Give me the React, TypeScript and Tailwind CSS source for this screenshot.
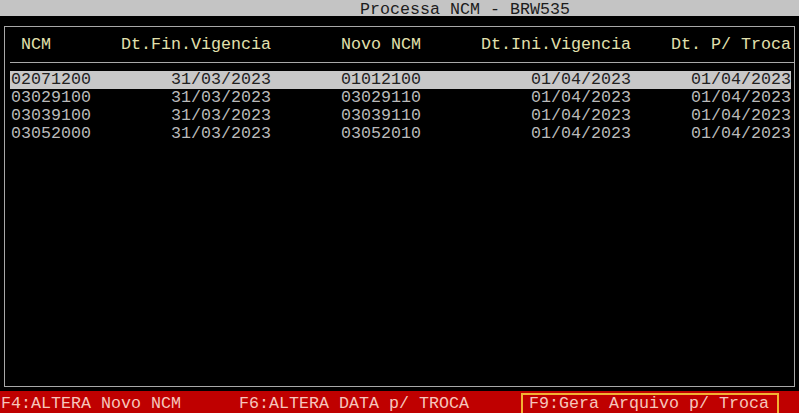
const rows = [
  ["02071200", "31/03/2023", "01012100", "01/04/2023", "01/04/2023"],
  ["03029100", "31/03/2023", "03029110", "01/04/2023", "01/04/2023"],
  ["03039100", "31/03/2023", "03039110", "01/04/2023", "01/04/2023"],
  ["03052000", "31/03/2023", "03052010", "01/04/2023", "01/04/2023"],
];

function Cols({ cells, header }: { cells: string[]; header?: boolean }) {
  return (
    <>
      <span className={`w-[100px] whitespace-pre ${header ? "pl-[10px]" : ""}`}>{cells[0]}</span>
      <span className="w-[160px] text-right whitespace-pre">{cells[1]}</span>
      <span className="w-[150px] text-right whitespace-pre">{cells[2]}</span>
      <span className="w-[210px] text-right whitespace-pre">{cells[3]}</span>
      <span className="w-[160px] text-right whitespace-pre">{cells[4]}</span>
    </>
  );
}

export default function App() {
  return (
    <div className="w-[799px] h-[413px] bg-black overflow-hidden font-['Liberation_Mono','Courier_New',monospace] text-[16.67px]">
      {/* title bar */}
      <div className="h-[16px] bg-[#c4c4c4] text-[#1c1c1c] pl-[360px]">
        <div className="leading-[19px] whitespace-pre">Processa NCM - BRW535</div>
      </div>

      {/* browse box */}
      <div className="mt-[10px] ml-[4px] w-[791px] h-[361px] border border-[#a8a8a8]">
        <div className="h-[36px] border-b border-[#a8a8a8] flex items-center ml-[5px] pl-px text-[#e2e0ae]">
          <Cols header cells={["NCM", "Dt.Fin.Vigencia", "Novo NCM", "Dt.Ini.Vigencia", "Dt. P/ Troca"]} />
        </div>
        <div className="mt-[8px] flex flex-col">
          {rows.map((r, i) => (
            <div
              key={i}
              className={`ml-[5px] w-[781px] h-[18px] leading-[18px] pl-px flex ${
                i === 0 ? "bg-[#c8c8c8] text-[#222]" : "text-[#bababa]"
              }`}
            >
              <Cols cells={r} />
            </div>
          ))}
        </div>
      </div>

      {/* function keys */}
      <div className="mt-[4px] h-[22px] bg-[#bf0000] text-[#f6c6bc] flex items-end">
        <span className="w-[239px] pl-px leading-[18px] whitespace-pre">F4:ALTERA Novo NCM</span>
        <span className="w-[282px] leading-[18px] whitespace-pre">F6:ALTERA DATA p/ TROCA</span>
        <span className="w-[258px] h-[20px] border-2 border-b-0 border-[#f2b233] pl-[6px] leading-[18px] whitespace-pre">
          F9:Gera Arquivo p/ Troca
        </span>
      </div>
    </div>
  );
}
